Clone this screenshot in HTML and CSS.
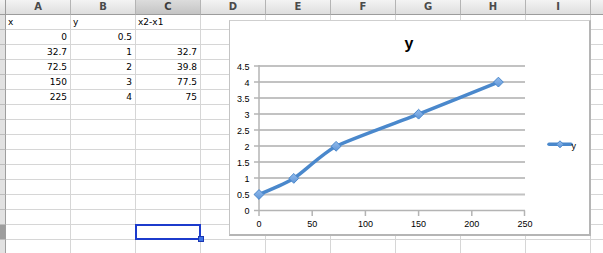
FILE: index.html
```html
<!DOCTYPE html>
<html>
<head>
<meta charset="utf-8">
<link rel="stylesheet" href="styles.css">
</head>
<body>
<div class="sheet">
  <div class="c h corner"></div><div class="c h">A</div><div class="c h">B</div><div class="c h hs">C</div><div class="c h">D</div><div class="c h">E</div><div class="c h">F</div><div class="c h">G</div><div class="c h">H</div><div class="c h">I</div><div class="c h"></div>

  <div class="c rh"></div><div class="c">x</div><div class="c">y</div><div class="c">x2-x1</div><div class="c"></div><div class="c"></div><div class="c"></div><div class="c"></div><div class="c"></div><div class="c"></div><div class="c"></div>
  <div class="c rh"></div><div class="c n">0</div><div class="c n">0.5</div><div class="c"></div><div class="c"></div><div class="c"></div><div class="c"></div><div class="c"></div><div class="c"></div><div class="c"></div><div class="c"></div>
  <div class="c rh"></div><div class="c n">32.7</div><div class="c n">1</div><div class="c n">32.7</div><div class="c"></div><div class="c"></div><div class="c"></div><div class="c"></div><div class="c"></div><div class="c"></div><div class="c"></div>
  <div class="c rh"></div><div class="c n">72.5</div><div class="c n">2</div><div class="c n">39.8</div><div class="c"></div><div class="c"></div><div class="c"></div><div class="c"></div><div class="c"></div><div class="c"></div><div class="c"></div>
  <div class="c rh"></div><div class="c n">150</div><div class="c n">3</div><div class="c n">77.5</div><div class="c"></div><div class="c"></div><div class="c"></div><div class="c"></div><div class="c"></div><div class="c"></div><div class="c"></div>
  <div class="c rh"></div><div class="c n">225</div><div class="c n">4</div><div class="c n">75</div><div class="c"></div><div class="c"></div><div class="c"></div><div class="c"></div><div class="c"></div><div class="c"></div><div class="c"></div>
  <div class="c rh"></div><div class="c"></div><div class="c"></div><div class="c"></div><div class="c"></div><div class="c"></div><div class="c"></div><div class="c"></div><div class="c"></div><div class="c"></div><div class="c"></div>
  <div class="c rh"></div><div class="c"></div><div class="c"></div><div class="c"></div><div class="c"></div><div class="c"></div><div class="c"></div><div class="c"></div><div class="c"></div><div class="c"></div><div class="c"></div>
  <div class="c rh"></div><div class="c"></div><div class="c"></div><div class="c"></div><div class="c"></div><div class="c"></div><div class="c"></div><div class="c"></div><div class="c"></div><div class="c"></div><div class="c"></div>
  <div class="c rh"></div><div class="c"></div><div class="c"></div><div class="c"></div><div class="c"></div><div class="c"></div><div class="c"></div><div class="c"></div><div class="c"></div><div class="c"></div><div class="c"></div>
  <div class="c rh"></div><div class="c"></div><div class="c"></div><div class="c"></div><div class="c"></div><div class="c"></div><div class="c"></div><div class="c"></div><div class="c"></div><div class="c"></div><div class="c"></div>
  <div class="c rh"></div><div class="c"></div><div class="c"></div><div class="c"></div><div class="c"></div><div class="c"></div><div class="c"></div><div class="c"></div><div class="c"></div><div class="c"></div><div class="c"></div>
  <div class="c rh"></div><div class="c"></div><div class="c"></div><div class="c"></div><div class="c"></div><div class="c"></div><div class="c"></div><div class="c"></div><div class="c"></div><div class="c"></div><div class="c"></div>
  <div class="c rh"></div><div class="c"></div><div class="c"></div><div class="c"></div><div class="c"></div><div class="c"></div><div class="c"></div><div class="c"></div><div class="c"></div><div class="c"></div><div class="c"></div>
  <div class="c rh rhs"></div><div class="c"></div><div class="c"></div><div class="c sel"></div><div class="c"></div><div class="c"></div><div class="c"></div><div class="c"></div><div class="c"></div><div class="c"></div><div class="c"></div>
  <div class="c rh"></div><div class="c"></div><div class="c"></div><div class="c"></div><div class="c"></div><div class="c"></div><div class="c"></div><div class="c"></div><div class="c"></div><div class="c"></div><div class="c"></div>
</div>

<div class="chart">
  <svg class="plot" width="359" height="213" viewBox="1 1 359 213">
    <defs>
      <linearGradient id="mk" x1="0" y1="0" x2="0" y2="1">
        <stop offset="0" stop-color="#93bbec"/>
        <stop offset="1" stop-color="#5f96d8"/>
      </linearGradient>
    </defs>
    <text class="title" x="180" y="28.5" text-anchor="middle">y</text>
    <g class="grid">
      <line x1="30" y1="46" x2="296" y2="46"/>
      <line x1="30" y1="62" x2="296" y2="62"/>
      <line x1="30" y1="78" x2="296" y2="78"/>
      <line x1="30" y1="94" x2="296" y2="94"/>
      <line x1="30" y1="110" x2="296" y2="110"/>
      <line x1="30" y1="126" x2="296" y2="126"/>
      <line x1="30" y1="142" x2="296" y2="142"/>
      <line x1="30" y1="158" x2="296" y2="158"/>
      <line x1="30" y1="174.5" x2="296" y2="174.5"/>
    </g>
    <g class="axis">
      <line x1="30" y1="45" x2="30" y2="196"/>
      <line x1="30" y1="190.5" x2="296" y2="190.5"/>
      <line x1="25" y1="46" x2="30" y2="46"/>
      <line x1="25" y1="62" x2="30" y2="62"/>
      <line x1="25" y1="78" x2="30" y2="78"/>
      <line x1="25" y1="94" x2="30" y2="94"/>
      <line x1="25" y1="110" x2="30" y2="110"/>
      <line x1="25" y1="126" x2="30" y2="126"/>
      <line x1="25" y1="142" x2="30" y2="142"/>
      <line x1="25" y1="158" x2="30" y2="158"/>
      <line x1="25" y1="174.5" x2="30" y2="174.5"/>
      <line x1="25" y1="190.5" x2="30" y2="190.5"/>
      <line x1="83.2" y1="190.5" x2="83.2" y2="196"/>
      <line x1="136.4" y1="190.5" x2="136.4" y2="196"/>
      <line x1="189.6" y1="190.5" x2="189.6" y2="196"/>
      <line x1="242.8" y1="190.5" x2="242.8" y2="196"/>
      <line x1="295.5" y1="190.5" x2="295.5" y2="196"/>
    </g>
    <g class="lab" text-anchor="end">
      <text x="20.5" y="49.5">4.5</text>
      <text x="20.5" y="65.5">4</text>
      <text x="20.5" y="81.5">3.5</text>
      <text x="20.5" y="97.5">3</text>
      <text x="20.5" y="113.5">2.5</text>
      <text x="20.5" y="129.5">2</text>
      <text x="20.5" y="145.5">1.5</text>
      <text x="20.5" y="161.5">1</text>
      <text x="20.5" y="178">0.5</text>
      <text x="20.5" y="194">0</text>
    </g>
    <g class="lab" text-anchor="middle">
      <text x="30" y="207">0</text>
      <text x="83.2" y="207">50</text>
      <text x="136.4" y="207">100</text>
      <text x="189.6" y="207">150</text>
      <text x="242.8" y="207">200</text>
      <text x="296" y="207">250</text>
    </g>
    <path class="series" d="M30 174.5 C33.5 172.9 57.1 163.2 64.8 158.4 C72.5 153.6 94.6 132.7 107.1 126.3 C119.6 119.9 173.4 100.6 189.6 94.2 C205.8 87.8 261.4 65.3 269.4 62.1"/>
    <g class="marker">
      <path d="M30 169.6 L34.9 174.5 L30 179.4 L25.1 174.5 Z"/>
      <path d="M64.8 153.5 L69.7 158.4 L64.8 163.3 L59.9 158.4 Z"/>
      <path d="M107.1 121.4 L112 126.3 L107.1 131.2 L102.2 126.3 Z"/>
      <path d="M189.6 89.3 L194.5 94.2 L189.6 99.1 L184.7 94.2 Z"/>
      <path d="M269.4 57.2 L274.3 62.1 L269.4 67 L264.5 62.1 Z"/>
    </g>
    <line class="series" x1="320" y1="124.3" x2="342" y2="124.3"/>
    <path class="marker" d="M331 120.8 L334.5 124.3 L331 127.8 L327.5 124.3 Z"/>
    <text class="lab" x="342.5" y="128.5">y</text>
  </svg>
</div>
</body>
</html>
```

FILE: styles.css
```css
html, body {
  margin: 0;
  padding: 0;
}

body {
  width: 603px;
  height: 253px;
  overflow: hidden;
  position: relative;
  background: #ffffff;
  font-family: "DejaVu Sans", Verdana, sans-serif;
  font-size: 9px;
  color: #000;
}

.sheet {
  display: grid;
  grid-template-columns: 6px repeat(9, 65px) 20px;
  grid-auto-rows: 15px;
}

.c {
  box-sizing: border-box;
  border-right: 1px solid #d6d6d6;
  border-bottom: 1px solid #d6d6d6;
  padding: 0 3px 0 2px;
  line-height: 14px;
  white-space: nowrap;
  overflow: hidden;
}

.n {
  text-align: right;
}

.h {
  background: linear-gradient(#f3f3f3, #dedede);
  border-right: 1px solid #b4b4b4;
  border-bottom: 1px solid #9c9c9c;
  text-align: center;
  font-weight: bold;
  font-size: 10px;
  color: #4a4a4a;
  line-height: 14px;
  padding: 0;
}

.hs {
  background: linear-gradient(#dcdcdc, #c4c4c4);
  color: #3c3c3c;
}

.corner {
  border-right-color: #9c9c9c;
}

.rh {
  background: #e2e2e2;
  border-right: 1px solid #9e9e9e;
  border-bottom: 1px solid #bdbdbd;
  padding: 0;
}

.rhs {
  background: #9d9d9d;
}

.sel {
  position: relative;
  overflow: visible;
}

.sel::before {
  content: "";
  position: absolute;
  left: -1px;
  top: -1px;
  width: 66px;
  height: 16px;
  box-sizing: border-box;
  border: 2px solid #1c3bcc;
}

.sel::after {
  content: "";
  position: absolute;
  left: 62px;
  top: 11px;
  width: 6px;
  height: 6px;
  box-sizing: border-box;
  background: #3f74e4;
  border: 1px solid #1a36b4;
}

.chart {
  position: absolute;
  left: 229px;
  top: 20px;
  width: 362px;
  height: 216px;
  box-sizing: border-box;
  background: #ffffff;
  border-top: 1px solid #cfcfcf;
  border-left: 1px solid #c4c4c4;
  border-right: 2px solid #b5b5b5;
  border-bottom: 2px solid #b5b5b5;
}

.plot {
  display: block;
}

.title {
  font-family: "Liberation Sans", Arial, sans-serif;
  font-weight: bold;
  font-size: 16px;
  fill: #000;
}

.grid line {
  stroke: #c2c2c2;
  stroke-width: 2;
}

.axis line {
  stroke: #b4b4b4;
  stroke-width: 1.5;
}

.lab {
  font-family: "Liberation Sans", Arial, sans-serif;
  font-size: 9px;
  fill: #000;
}

.series {
  fill: none;
  stroke: #4a88cc;
  stroke-width: 3.5;
  stroke-linejoin: round;
  stroke-linecap: round;
}

.marker path,
path.marker {
  fill: url(#mk);
  stroke: #4a88cc;
  stroke-width: 1;
}
```
